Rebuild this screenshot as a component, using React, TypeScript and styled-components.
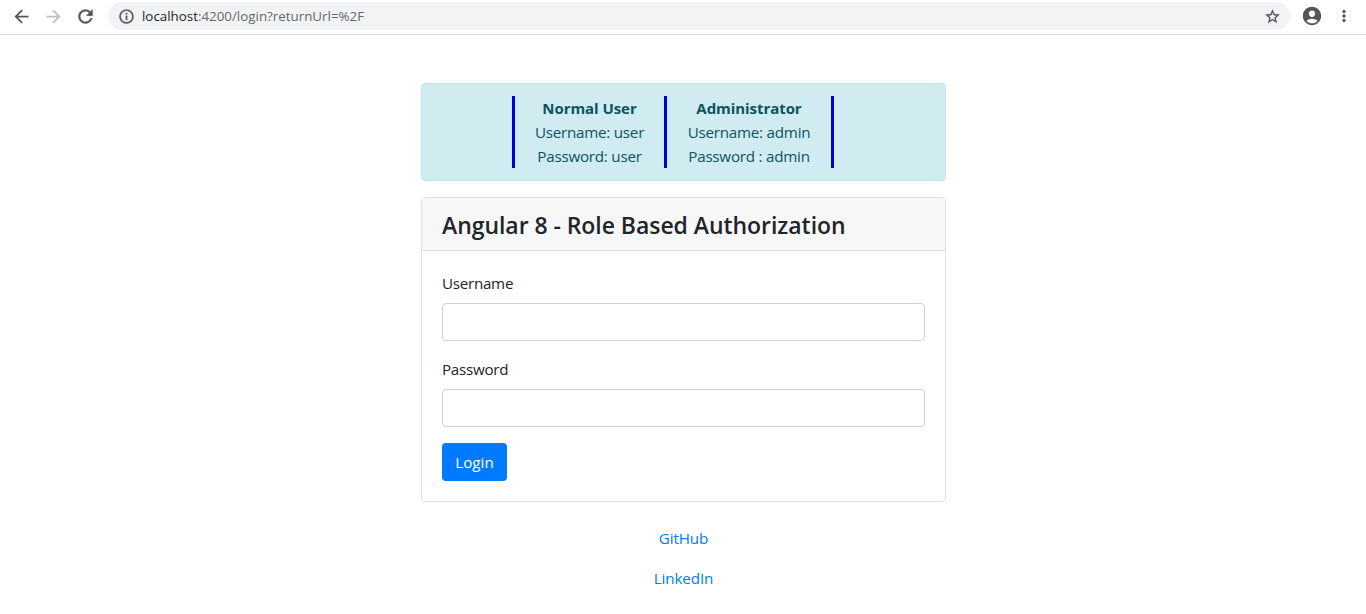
import React from "react";
import styled, { createGlobalStyle } from "styled-components";
import {
  MdAccountCircle,
  MdArrowBack,
  MdArrowForward,
  MdInfoOutline,
  MdMoreVert,
  MdRefresh,
  MdStarBorder,
} from "react-icons/md";

const GlobalStyle = createGlobalStyle`
  *, *::before, *::after { box-sizing: border-box; }
  body {
    margin: 0;
    background: #fff;
    color: #212529;
    font: 400 15.2px/24px "Segoe UI", "Open Sans", "Noto Sans", sans-serif;
    letter-spacing: -0.28px;
    overflow: hidden;
  }
`;

const BrowserBar = styled.header`
  display: flex;
  align-items: center;
  height: 35px;
  padding: 0 6px 2px 5.5px;
  border-bottom: 1px solid #dadce0;
  color: #5f6368;
`;

const BarButton = styled.span<{ $muted?: boolean; $heavy?: boolean }>`
  display: flex;
  flex: none;
  align-items: center;
  justify-content: center;
  width: 32px;
  height: 28px;
  color: ${(p) => (p.$muted ? "#babcbe" : "#53565a")};

  svg {
    stroke-width: 0;
  }

  path:last-child {
    stroke-width: ${(p) => (p.$heavy ? 0.5 : 0)};
  }
`;

const AddressBar = styled.div`
  display: flex;
  flex: 1;
  align-items: center;
  height: 28px;
  margin: 0 6px 0 6.5px;
  padding: 0 9.5px 0 9.5px;
  border-radius: 14px;
  background: #f1f3f4;
  color: #53565a;

  svg path:last-child {
    stroke-width: 0.4;
  }
`;

const Url = styled.span`
  flex: 1;
  margin-left: 7.5px;
  font-size: 13.33px;
  letter-spacing: 0.01px;
  color: #65696e;
`;

const Host = styled.span`
  color: #202124;
`;

const Page = styled.main`
  display: flex;
  flex-direction: column;
  width: 525px;
  margin: 48px auto 0 421px;
`;

const Alert = styled.section`
  display: flex;
  justify-content: center;
  height: 98px;
  padding: 12px 41px 12px 20px;
  border: 1px solid #bee5eb;
  border-radius: 4px;
  background: #d1ecf1;
  color: #0c5460;
`;

const Account = styled.div<{ $width: number; $first?: boolean }>`
  width: ${(p) => p.$width}px;
  border-right: 3px solid #0000dc;
  border-left: ${(p) => (p.$first ? "3px solid #0000dc" : "0")};
  text-align: center;
  white-space: nowrap;
`;

const AccountRole = styled.div`
  font-size: 15px;
  font-weight: 700;
  letter-spacing: -0.06px;
`;

const Credential = styled.div`
  letter-spacing: -0.24px;
`;

const Card = styled.section`
  margin-top: 16px;
  border: 1px solid #dfdfdf;
  border-radius: 4px;
`;

const CardHeader = styled.h4`
  height: 53px;
  margin: 0;
  padding: 13px 20px 11px;
  border-bottom: 1px solid #dfdfdf;
  background: #f7f7f7;
  font-size: 23px;
  font-weight: 600;
  letter-spacing: -0.05px;
  line-height: 29px;
  white-space: nowrap;
`;

const Form = styled.form`
  display: flex;
  flex-direction: column;
  align-items: flex-start;
  gap: 16px;
  padding: 20px;
`;

const Field = styled.label`
  display: flex;
  flex-direction: column;
  gap: 8px;
  width: 100%;
`;

const FieldLabel = styled.span`
  align-self: flex-start;
`;

const Input = styled.input`
  width: 100%;
  height: 38px;
  padding: 6px 12px;
  border: 1px solid #ced4da;
  border-radius: 4px;
  background: #fff;
  font: inherit;
  outline: none;
`;

const LoginButton = styled.button`
  width: 65px;
  height: 38px;
  padding: 0;
  border: 0;
  border-radius: 4px;
  background: #007bff;
  color: #fff;
  font: inherit;
`;

const Links = styled.nav`
  display: flex;
  flex-direction: column;
  align-items: center;
  gap: 16px;
  margin-top: 24px;
`;

const Link = styled.a`
  color: #007bff;
  letter-spacing: -0.1px;
  text-decoration: none;
`;

export default function App() {
  return (
    <>
      <GlobalStyle />
      <BrowserBar>
        <BarButton><MdArrowBack size={21} /></BarButton>
        <BarButton $muted><MdArrowForward size={21} /></BarButton>
        <BarButton $heavy><MdRefresh size={21} /></BarButton>
        <AddressBar>
          <MdInfoOutline size={17} />
          <Url><Host>localhost</Host>:4200/login?returnUrl=%2F</Url>
          <MdStarBorder size={17} />
        </AddressBar>
        <BarButton><MdAccountCircle size={22} /></BarButton>
        <BarButton $heavy><MdMoreVert size={18} /></BarButton>
      </BrowserBar>
      <Page>
        <Alert>
          <Account $width={155} $first>
            <AccountRole>Normal User</AccountRole>
            <Credential>Username: user</Credential>
            <Credential>Password: user</Credential>
          </Account>
          <Account $width={167}>
            <AccountRole>Administrator</AccountRole>
            <Credential>Username: admin</Credential>
            <Credential>Password : admin</Credential>
          </Account>
        </Alert>
        <Card>
          <CardHeader>Angular 8 - Role Based Authorization</CardHeader>
          <Form>
            <Field>
              <FieldLabel>Username</FieldLabel>
              <Input type="text" />
            </Field>
            <Field>
              <FieldLabel>Password</FieldLabel>
              <Input type="password" />
            </Field>
            <LoginButton type="button">Login</LoginButton>
          </Form>
        </Card>
        <Links>
          <Link>GitHub</Link>
          <Link>LinkedIn</Link>
        </Links>
      </Page>
    </>
  );
}
